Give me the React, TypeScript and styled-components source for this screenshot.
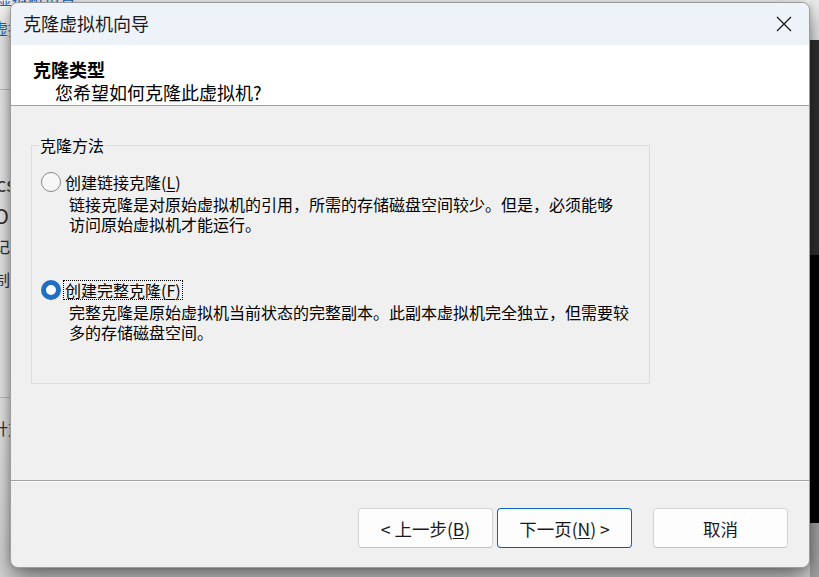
import React from "react";
import styled, { createGlobalStyle } from "styled-components";

const GlobalStyle = createGlobalStyle`
  html, body { margin: 0; padding: 0; }
  body {
    background: #f3f3f3;
    font-family: "Noto Sans CJK SC", "Noto Sans", sans-serif;
  }
`;

const FONT = `"Noto Sans CJK SC", "Noto Sans", sans-serif`;

/* ---------- desktop / background windows ---------- */

const Desktop = styled.div`
  position: relative;
  width: 819px;
  height: 577px;
  overflow: hidden;
  display: flex;
  font-family: ${FONT};
`;

const Sidebar = styled.div`
  width: 810px;
  flex: none;
  background: linear-gradient(#f6f6f6 0%, #f2f2f2 70%, #dadada 100%);
  display: flex;
  flex-direction: column;
  overflow: hidden;
`;

const SideText = styled.div<{ $mt: number; $blue?: boolean; $ml?: number; $size?: number }>`
  margin-top: ${(p) => p.$mt}px;
  margin-left: ${(p) => p.$ml ?? 0}px;
  font-size: ${(p) => p.$size ?? 16}px;
  line-height: 20px;
  height: 20px;
  white-space: nowrap;
  color: ${(p) => (p.$blue ? "#2266b8" : "#333")};
`;

const SideRule = styled.div<{ $mt: number }>`
  margin-top: ${(p) => p.$mt}px;
  height: 1px;
  background: #c8c8c8;
`;

const RightPane = styled.div`
  flex: 1;
  display: flex;
  flex-direction: column;
`;

const PaneBlock = styled.div<{ $h?: number; $bg: string }>`
  height: ${(p) => (p.$h ? `${p.$h}px` : "auto")};
  flex: ${(p) => (p.$h ? "none" : "1")};
  background: ${(p) => p.$bg};
`;

/* ---------- dialog ---------- */

const Dialog = styled.div`
  position: absolute;
  left: 10px;
  top: 2px;
  width: 800px;
  height: 566px;
  box-sizing: border-box;
  border: 1px solid #9c9c9c;
  border-radius: 8px;
  overflow: hidden;
  background: #f0f0f0;
  display: flex;
  flex-direction: column;
  box-shadow: 0 12px 26px rgba(0, 0, 0, 0.5), 0 0 6px rgba(0, 0, 0, 0.2);
`;

const TitleBar = styled.div`
  height: 42px;
  flex: none;
  background: #eef2f9;
  display: flex;
  align-items: center;
  justify-content: space-between;
`;

const Title = styled.div`
  padding-left: 12px;
  margin-top: -2px;
  font-size: 18px;
  line-height: 22px;
  color: #1a1a1a;
`;

const CloseButton = styled.div`
  width: 46px;
  height: 42px;
  margin-right: 2px;
  display: flex;
  align-items: center;
  justify-content: center;
`;

const Header = styled.div`
  height: 61px;
  flex: none;
  box-sizing: border-box;
  background: #ffffff;
  border-bottom: 1px solid #a0a0a0;
  padding: 13px 0 0 22px;
`;

const HeadTitle = styled.div`
  font-size: 18px;
  font-weight: 700;
  line-height: 22px;
  color: #000;
`;

const HeadSub = styled.div`
  margin-top: 2px;
  padding-left: 22px;
  font-size: 18px;
  line-height: 20px;
  color: #000;
`;

const Body = styled.div`
  flex: 1;
  padding: 29px 0 0 20px;
`;

const GroupBox = styled.fieldset`
  width: 619px;
  height: 249px;
  box-sizing: border-box;
  margin: 0;
  padding: 0;
  border: 1px solid #dcdcdc;
  min-inline-size: 0;
`;

const Legend = styled.legend`
  margin-left: 7px;
  padding: 0 1px;
  font-size: 16px;
  line-height: 20px;
  color: #000;
`;

const Options = styled.div`
  padding: 17px 0 0 9px;
  display: flex;
  flex-direction: column;
`;

const Option = styled.div<{ $mt?: number }>`
  margin-top: ${(p) => p.$mt ?? 0}px;
  display: flex;
  flex-direction: column;
`;

const OptionRow = styled.div`
  height: 20px;
  display: flex;
  align-items: center;
  gap: 3px;
`;

const Radio = styled.span<{ $checked?: boolean }>`
  width: 20px;
  height: 20px;
  box-sizing: border-box;
  border-radius: 50%;
  flex: none;
  border: ${(p) => (p.$checked ? "5.5px solid #1f6fc2" : "1px solid #888888")};
  background: ${(p) => (p.$checked ? "#ffffff" : "#f7f7f7")};
`;

const OptionLabel = styled.span<{ $focused?: boolean }>`
  padding: 0 1px;
  font-size: 16px;
  line-height: 18px;
  color: #000;
  white-space: nowrap;
  outline: ${(p) => (p.$focused ? "1px dotted #000" : "none")};
  outline-offset: 0;
`;

const Key = styled.span`
  text-decoration: underline;
  text-underline-offset: 2px;
`;

const Desc = styled.div`
  margin: 2px 0 0 28px;
  font-size: 16px;
  line-height: 20px;
  color: #000;
  white-space: nowrap;
`;

const Footer = styled.div`
  height: 87px;
  flex: none;
  box-sizing: border-box;
  border-top: 1px solid #a0a0a0;
  box-shadow: inset 0 1px 0 #ffffff;
  padding: 27px 21px 0 0;
  display: flex;
  justify-content: flex-end;
  align-items: flex-start;
`;

const Button = styled.div<{ $primary?: boolean; $ml?: number }>`
  width: 135px;
  height: 40px;
  box-sizing: border-box;
  margin-left: ${(p) => p.$ml ?? 0}px;
  border: 1px solid ${(p) => (p.$primary ? "#0a66c2" : "#d2d2d2")};
  border-bottom-color: ${(p) => (p.$primary ? "#0a5bb0" : "#c2c2c2")};
  border-radius: 4px;
  background: #fdfdfd;
  display: flex;
  align-items: center;
  justify-content: center;
  font-size: 17.5px;
  color: #1a1a1a;
  white-space: nowrap;
`;

export default function App() {
  return (
    <>
      <GlobalStyle />
      <Desktop>
        <Sidebar>
          <SideText $mt={-12} $blue $ml={-4}>
            虚拟机设置
          </SideText>
          <SideText $mt={10} $blue $ml={-8}>
            虚拟机
          </SideText>
          <SideRule $mt={51} />
          <SideText $mt={84} $ml={-4} $size={20}>
            cs
          </SideText>
          <SideText $mt={12} $ml={-6} $size={20}>
            O
          </SideText>
          <SideText $mt={10} $ml={-6}>
            记号
          </SideText>
          <SideText $mt={13} $ml={-6}>
            制表
          </SideText>
          <SideRule $mt={108} />
          <SideText $mt={20} $ml={-8}>
            针对
          </SideText>
        </Sidebar>
        <RightPane>
          <PaneBlock $h={40} $bg="#ececec" />
          <PaneBlock $h={215} $bg="#313131" />
          <PaneBlock $h={268} $bg="#000000" />
          <PaneBlock $bg="#a9a9a9" />
        </RightPane>

        <Dialog>
          <TitleBar>
            <Title>克隆虚拟机向导</Title>
            <CloseButton>
              <svg width="16" height="16" viewBox="0 0 16 16">
                <path d="M1 1 L15 15 M15 1 L1 15" stroke="#1a1a1a" strokeWidth="1.3" fill="none" />
              </svg>
            </CloseButton>
          </TitleBar>

          <Header>
            <HeadTitle>克隆类型</HeadTitle>
            <HeadSub>您希望如何克隆此虚拟机?</HeadSub>
          </Header>

          <Body>
            <GroupBox>
              <Legend>克隆方法</Legend>
              <Options>
                <Option>
                  <OptionRow>
                    <Radio />
                    <OptionLabel>
                      创建链接克隆(<Key>L</Key>)
                    </OptionLabel>
                  </OptionRow>
                  <Desc>
                    链接克隆是对原始虚拟机的引用，所需的存储磁盘空间较少。但是，必须能够
                    <br />
                    访问原始虚拟机才能运行。
                  </Desc>
                </Option>
                <Option $mt={46}>
                  <OptionRow>
                    <Radio $checked />
                    <OptionLabel $focused>
                      创建完整克隆(<Key>F</Key>)
                    </OptionLabel>
                  </OptionRow>
                  <Desc>
                    完整克隆是原始虚拟机当前状态的完整副本。此副本虚拟机完全独立，但需要较
                    <br />
                    多的存储磁盘空间。
                  </Desc>
                </Option>
              </Options>
            </GroupBox>
          </Body>

          <Footer>
            <Button>
              &lt; 上一步(<Key>B</Key>)
            </Button>
            <Button $primary $ml={4}>
              下一页(<Key>N</Key>) &gt;
            </Button>
            <Button $ml={21}>取消</Button>
          </Footer>
        </Dialog>
      </Desktop>
    </>
  );
}
